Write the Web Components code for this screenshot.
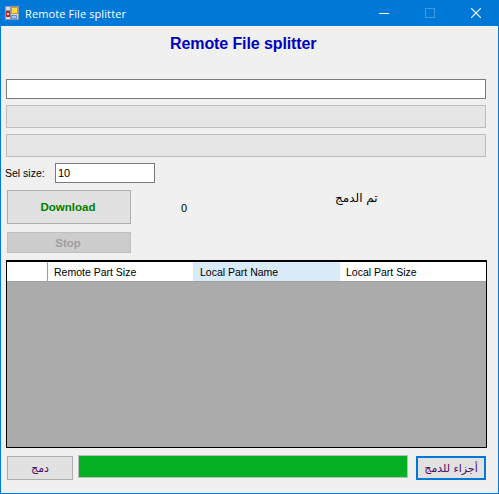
<!DOCTYPE html>
<html>
<head>
<meta charset="utf-8">
<title>Remote File splitter</title>
<style>
  html, body { margin: 0; padding: 0; overflow: hidden; background: #f0f0f0; }
  body { font: 11px "Liberation Sans", "DejaVu Sans", sans-serif; color: #000; }
</style>
</head>
<body>
<app-window>
  <title-bar slot="bar">Remote File splitter</title-bar>

  <h-title>Remote File splitter</h-title>

  <text-box style="margin: 17px 13px 0 6px; height: 20px;"></text-box>
  <flat-bar style="margin-top: 6px;"></flat-bar>
  <flat-bar style="margin-top: 6px;"></flat-bar>

  <size-row label="Sel size:" value="10"></size-row>

  <action-row></action-row>

  <parts-grid></parts-grid>

  <bottom-row></bottom-row>
</app-window>

<script>
class AppWindow extends HTMLElement {
  constructor() {
    super();
    this.attachShadow({ mode: "open" }).innerHTML = `
      <style>
        :host {
          display: flex;
          flex-direction: column;
          box-sizing: border-box;
          width: 499px;
          height: 494px;
          background: #f0f0f0;
          border: 1px solid #0078d7;
          border-top: 0;
        }
        .client { margin-left: -1px; margin-right: -1px; flex: 1; min-height: 0; }
      </style>
      <slot name="bar"></slot>
      <div class="client"><slot></slot></div>`;
  }
}

class TitleBar extends HTMLElement {
  constructor() {
    super();
    this.attachShadow({ mode: "open" }).innerHTML = `
      <style>
        :host {
          display: flex;
          align-items: center;
          height: 26px;
          margin: 0 -1px;
          background: #0078d7;
          color: #fff;
          font: 11px "Open Sans", "Noto Sans", sans-serif;
        }
        svg { display: block; flex: none; }
        .icon { margin-left: 5px; }
        .text { margin-left: 6px; flex: 1; letter-spacing: .1px; }
        .caps { display: flex; }
        .cap { width: 46px; height: 26px; display: flex; align-items: center; justify-content: center; }
      </style>
      <svg class="icon" width="14" height="14" viewBox="0 0 14 14">
        <rect x="0" y="0" width="14" height="14" fill="#d5dbe6"/>
        <rect x=".5" y=".5" width="13" height="13" fill="none" stroke="#8d97a8"/>
        <path d="M5.5 1V13M1 4.5H13" stroke="#8d97a8" fill="none"/>
        <rect x="1" y="5" width="4" height="6" fill="#c8201c"/>
        <rect x="2" y="7" width="2" height="2" fill="#f4d0c0"/>
        <rect x="6" y="1" width="7" height="7" fill="#d89a10"/>
        <rect x="7" y="2" width="5" height="5" fill="#ffd948"/>
        <rect x="6" y="9" width="6" height="4" fill="#5c8fd8"/>
        <rect x="7" y="10" width="4" height="2" fill="#a9c8f0"/>
      </svg>
      <span class="text"><slot></slot></span>
      <div class="caps">
        <div class="cap"><svg width="10" height="10" viewBox="0 0 10 10"><path d="M0 5.5H10" stroke="#fff" fill="none"/></svg></div>
        <div class="cap"><svg width="10" height="10" viewBox="0 0 10 10"><rect x=".5" y=".5" width="9" height="9" stroke="#3d9be6" fill="none"/></svg></div>
        <div class="cap"><svg width="10" height="10" viewBox="0 0 10 10"><path d="M0 0L10 10M10 0L0 10" stroke="#fff" stroke-width="1.1" fill="none"/></svg></div>
      </div>`;
  }
}

class HTitle extends HTMLElement {
  constructor() {
    super();
    this.attachShadow({ mode: "open" }).innerHTML = `
      <style>
        :host {
          display: block;
          height: 27px;
          margin-top: 9px;
          margin-left: 170px;
          font: bold 16px/18px "Liberation Sans", Arial, sans-serif;
          letter-spacing: -.1px;
          color: #0000c0;
        }
      </style>
      <slot></slot>`;
  }
}

class TextBox extends HTMLElement {
  constructor() {
    super();
    this.attachShadow({ mode: "open" }).innerHTML = `
      <style>
        :host {
          display: flex;
          align-items: center;
          box-sizing: border-box;
          background: #fff;
          border: 1px solid #7a7a7a;
          padding-left: 2px;
          font: 11px "Liberation Sans", sans-serif;
        }
      </style>
      <slot></slot>`;
  }
}

class FlatBar extends HTMLElement {
  constructor() {
    super();
    this.attachShadow({ mode: "open" }).innerHTML = `
      <style>
        :host {
          display: block;
          box-sizing: border-box;
          height: 23px;
          margin-left: 6px;
          margin-right: 13px;
          background: #e6e6e6;
          border: 1px solid #bcbcbc;
        }
      </style>`;
  }
}

class SizeRow extends HTMLElement {
  constructor() {
    super();
    this.attachShadow({ mode: "open" }).innerHTML = `
      <style>
        :host {
          display: flex;
          align-items: center;
          height: 20px;
          margin-top: 6px;
          padding-left: 5px;
          font: 10.5px "Liberation Sans", sans-serif;
        }
        .lab { width: 50px; }
        text-box { width: 100px; height: 20px; }
      </style>
      <span class="lab"></span>
      <text-box></text-box>`;
  }
  connectedCallback() {
    this.shadowRoot.querySelector(".lab").textContent = this.getAttribute("label");
    this.shadowRoot.querySelector("text-box").textContent = this.getAttribute("value");
  }
}

class FormButton extends HTMLElement {
  constructor() {
    super();
    this.attachShadow({ mode: "open" }).innerHTML = `
      <style>
        :host {
          display: flex;
          align-items: center;
          justify-content: center;
          box-sizing: border-box;
          background: #e1e1e1;
          border: 1px solid #adadad;
          font: 11px "Liberation Sans", sans-serif;
        }
        :host([kind=go]) { color: #008000; font-weight: bold; font-size: 11.5px; padding-right: 2px; }
        :host([kind=off]) { background: #cccccc; border-color: #bfbfbf; color: #a0a0a0; font-weight: bold; font-size: 11.5px; padding-right: 2px; }
        :host([kind=ar]) { color: #4b0f5e; font-family: "DejaVu Sans", sans-serif; }
        :host([kind=focus]) { color: #4b0f5e; font-family: "DejaVu Sans", sans-serif; border: 2px solid #0078d7; }
      </style>
      <slot></slot>`;
  }
}

class ActionRow extends HTMLElement {
  constructor() {
    super();
    this.attachShadow({ mode: "open" }).innerHTML = `
      <style>
        :host {
          display: flex;
          align-items: flex-start;
          margin-top: 7px;
          padding-left: 7px;
          font: 11px "Liberation Sans", sans-serif;
        }
        .btns { display: flex; flex-direction: column; gap: 8px; width: 124px; flex: none; }
        .go { height: 34px; }
        .off { height: 21px; }
        .zero { margin: 12px 0 0 50px; width: 6px; line-height: 13px; }
        .msg {
          margin: 0 0 0 148px;
          font: 12px/17px "DejaVu Sans", sans-serif;
          white-space: nowrap;
        }
      </style>
      <div class="btns">
        <form-button class="go" kind="go">Download</form-button>
        <form-button class="off" kind="off">Stop</form-button>
      </div>
      <span class="zero">0</span>
      <span class="msg" dir="rtl">تم الدمج</span>`;
  }
}

class PartsGrid extends HTMLElement {
  constructor() {
    super();
    this.attachShadow({ mode: "open" }).innerHTML = `
      <style>
        :host {
          display: flex;
          flex-direction: column;
          box-sizing: border-box;
          height: 188px;
          margin: 7px 12px 0 6px;
          background: #ababab;
          border: 1px solid #000;
          border-top-width: 2px;
          font: 10.5px "Liberation Sans", sans-serif;
        }
        .head {
          display: grid;
          grid-template-columns: 41px 145px 147px 1fr;
          height: 19px;
          background: #fff;
          border-bottom: 1px solid #a0a0a0;
        }
        .head div { display: flex; align-items: center; padding-left: 6px; white-space: nowrap; }
        .head div:first-child { border-right: 1px solid #a0a0a0; }
        .head .sel { background: #d9eaf9; padding-left: 7px; }
      </style>
      <div class="head">
        <div></div>
        <div>Remote Part Size</div>
        <div class="sel">Local Part Name</div>
        <div>Local Part Size</div>
      </div>`;
  }
}

class BottomRow extends HTMLElement {
  constructor() {
    super();
    this.attachShadow({ mode: "open" }).innerHTML = `
      <style>
        :host {
          display: flex;
          align-items: flex-start;
          margin-top: 7px;
          padding-left: 7px;
          font: 11px "DejaVu Sans", sans-serif;
        }
        .merge { width: 66px; height: 24px; margin-top: 1px; }
        .bar {
          box-sizing: border-box;
          width: 330px;
          height: 23px;
          margin-left: 5px;
          background: #06b025;
          border: 1px solid #bcbcbc;
        }
        .parts { width: 70px; height: 24px; margin: 1px 0 0 8px; white-space: nowrap; }
      </style>
      <form-button class="merge" kind="ar">دمج</form-button>
      <div class="bar"></div>
      <form-button class="parts" kind="focus">أجزاء للدمج</form-button>`;
  }
}

customElements.define("app-window", AppWindow);
customElements.define("title-bar", TitleBar);
customElements.define("h-title", HTitle);
customElements.define("text-box", TextBox);
customElements.define("flat-bar", FlatBar);
customElements.define("size-row", SizeRow);
customElements.define("form-button", FormButton);
customElements.define("action-row", ActionRow);
customElements.define("parts-grid", PartsGrid);
customElements.define("bottom-row", BottomRow);
</script>
</body>
</html>
